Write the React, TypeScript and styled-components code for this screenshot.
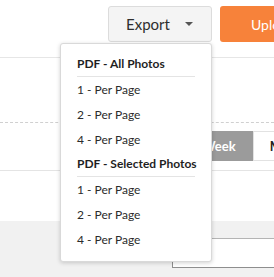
import React from 'react';
import styled, { createGlobalStyle } from 'styled-components';

const GlobalStyle = createGlobalStyle`
  html, body {
    margin: 0;
    padding: 0;
    background: #ffffff;
    font-family: Lato, "Open Sans", sans-serif;
    color: #333333;
  }
`;

const exportGroups = [
  { title: 'PDF - All Photos', items: ['1 - Per Page', '2 - Per Page', '4 - Per Page'] },
  { title: 'PDF - Selected Photos', items: ['1 - Per Page', '2 - Per Page', '4 - Per Page'] },
];

const views = ['Day', 'Week', 'Month'];

const App = () => {
  return (
    <Page>
      <GlobalStyle />
      <Header>
        <ExportButton>
          Export
          <Caret />
        </ExportButton>
        <UploadButton>Upload</UploadButton>
      </Header>
      <Filters />
      <Toolbar>
        <ViewToggle>
          {views.map(v => (
            <ViewButton key={v} active={v === 'Week'}>
              {v}
            </ViewButton>
          ))}
        </ViewToggle>
      </Toolbar>
      <Spacer />
      <Tray>
        <SortBox />
      </Tray>
      <Menu>
        {exportGroups.map(group => (
          <MenuGroup key={group.title}>
            <MenuTitle>{group.title}</MenuTitle>
            {group.items.map(item => (
              <MenuItem key={item}>{item}</MenuItem>
            ))}
          </MenuGroup>
        ))}
      </Menu>
    </Page>
  );
};

const Page = styled.div`
  position: relative;
  width: 274px;
  height: 277px;
  overflow: hidden;
  display: flex;
  flex-direction: column;
`;

const Header = styled.div`
  height: 58px;
  flex: none;
  box-sizing: border-box;
  display: flex;
  align-items: flex-start;
  gap: 8px;
  padding: 6px 0 0 108px;
  border-bottom: 1px solid #e6e6e6;
`;

const ExportButton = styled.div`
  flex: none;
  width: 104px;
  height: 36px;
  box-sizing: border-box;
  display: flex;
  align-items: center;
  justify-content: space-between;
  padding: 0 18px 0 17px;
  background: #f4f4f4;
  border: 1px solid #dcdcdc;
  border-radius: 3px;
  font-size: 15px;
  color: #2e2e2e;
`;

const Caret = styled.span`
  width: 0;
  height: 0;
  border-left: 4px solid transparent;
  border-right: 4px solid transparent;
  border-top: 4px solid #555555;
`;

const UploadButton = styled.div`
  flex: none;
  width: 110px;
  height: 36px;
  box-sizing: border-box;
  display: flex;
  align-items: center;
  padding-left: 31px;
  background: #f7823a;
  border-radius: 3px;
  color: #ffffff;
  font-size: 14px;
`;

const Filters = styled.div`
  height: 65px;
  flex: none;
  box-sizing: border-box;
  border-bottom: 1px dashed #d0d0d0;
`;

const Toolbar = styled.div`
  height: 48px;
  flex: none;
  box-sizing: border-box;
  padding: 8px 0 0 128px;
  border-bottom: 1px solid #e4e4e4;
`;

const ViewToggle = styled.div`
  display: flex;
`;

const ViewButton = styled.div<{ active?: boolean }>`
  flex: none;
  height: 30px;
  box-sizing: border-box;
  display: flex;
  align-items: center;
  padding: 0 16px;
  font-size: 13px;
  font-weight: 700;
  background: ${p => (p.active ? '#9b9b9b' : '#ffffff')};
  color: ${p => (p.active ? '#ffffff' : '#222222')};
  border: 1px solid ${p => (p.active ? '#9b9b9b' : '#e2e2e2')};
`;

const Spacer = styled.div`
  height: 50px;
  flex: none;
`;

const Tray = styled.div`
  flex: 1;
  background: #f1f1f1;
  padding: 17px 0 0 172px;
`;

const SortBox = styled.div`
  height: 30px;
  box-sizing: border-box;
  background: #ffffff;
  border: 1px solid #8e8e8e;
  border-top-color: #b4b4b4;
  border-right: none;
`;

const Menu = styled.div`
  position: absolute;
  top: 43px;
  left: 60px;
  width: 152px;
  box-sizing: border-box;
  padding: 8px 16px 9px;
  background: #ffffff;
  border: 1px solid #d9d9d9;
  border-radius: 3px;
  box-shadow: 0 1px 4px rgba(0, 0, 0, 0.18);
`;

const MenuGroup = styled.div`
  display: flex;
  flex-direction: column;
`;

const MenuTitle = styled.div`
  height: 24px;
  line-height: 24px;
  font-size: 12px;
  font-weight: 700;
  color: #1f1f1f;
  border-bottom: 1px solid #e4e4e4;
  white-space: nowrap;
`;

const MenuItem = styled.div`
  height: 25px;
  line-height: 25px;
  font-size: 12px;
  color: #2b2b2b;
  white-space: nowrap;
`;

export default App;
